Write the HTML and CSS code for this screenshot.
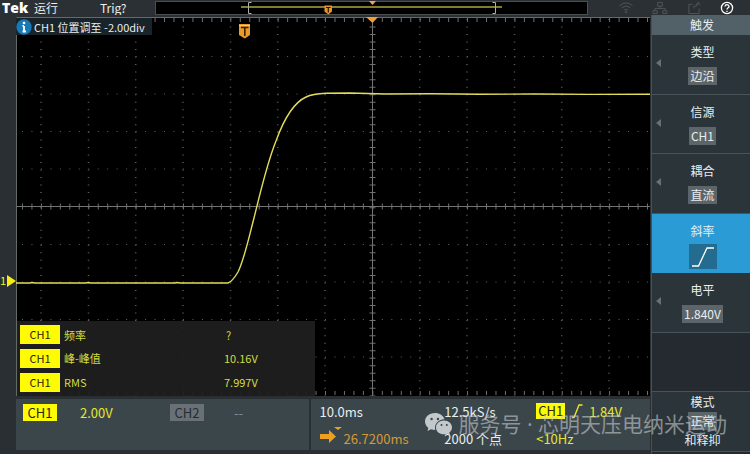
FILE: index.html
```html
<!DOCTYPE html>
<html lang="zh-CN">
<head>
<meta charset="utf-8">
<title>Tek</title>
<link rel="stylesheet" href="styles.css">
</head>
<body>
<div class="device">
  <header class="topbar">
    <div class="status"><strong class="brand">Tek</strong><span class="run">运行</span><span>Trig?</span></div>
    <svg class="record" viewBox="155 1 433 14" preserveAspectRatio="none" aria-hidden="true">
      <rect x="155.500" y="1.500" width="432" height="13" fill="#000" stroke="#4b4f50"/>
      <path d="M241 7H502" stroke="#aaa740" stroke-width="1.600"/>
      <path d="M251.500 2.500H248.500V13.500H251.500M492.500 2.500H495.500V13.500H492.500" fill="none" stroke="#b0b0aa"/>
      <path d="M324.500 5.500H332V11.500L328.300 14.500L324.500 11.500Z" fill="#e8952a"/>
      <path d="M326 7.500H330.600M328.300 7.500V12.500" stroke="#241603" stroke-width="1.200"/>
      <path d="M369 1H376L372.500 5Z" fill="#eda45c"/>
    </svg>
    <div class="tools">
      <svg viewBox="0 0 16 14" class="tool dim"><path d="M1 5Q8-1 15 5M3.500 7.500Q8 3.500 12.500 7.500M6 10Q8 8 10 10"/><circle cx="8" cy="12" r=".7"/></svg>
      <svg viewBox="0 0 16 14" class="tool dim"><path d="M5.500 1.500H10.500V5.500H5.500ZM8 5.500V8M2.500 10V8H13.500V10M.5 10.500H5V13.500H.5ZM11 10.500H15.500V13.500H11Z"/></svg>
      <svg viewBox="0 0 16 14" class="tool dim"><path d="M6.500 3.500H2.500V13.500H13.500V8M8 8V5.500H9.500Q12.500 5.500 12.500 2M10 4L12.500 1.500L15 4"/></svg>
      <button class="help" aria-label="帮助"><svg viewBox="0 0 14 14"><circle cx="7" cy="7" r="5.600"/><path d="M5 5.500Q5.200 3.700 7 3.700Q9 3.800 9 5.400Q9 6.400 7.800 7Q7 7.500 7 8.600M7 9.800V11"/></svg></button>
    </div>
  </header>
  <main class="work">
    <section class="scope">
      <svg class="channel-mark" viewBox="0 0 16 379" preserveAspectRatio="none" aria-hidden="true"><path d="M7 258L16 264L7 270Z" fill="#f3ef13"/></svg>
      <span class="channel-number">1</span>
      <div class="plot">
        <svg class="wave" viewBox="16 17 634 379" preserveAspectRatio="none" role="img" aria-label="CH1">
          <defs>
            <path id="v" d="M0 18.900V396"/>
            <path id="h" d="M12.500 0H650"/>
          </defs>
          <g class="dots-v">
            <use href="#v" x="41"/><use href="#v" x="88.500"/><use href="#v" x="135.700"/><use href="#v" x="183"/><use href="#v" x="230.500"/><use href="#v" x="277.700"/><use href="#v" x="325"/><use href="#v" x="419.700"/><use href="#v" x="467"/><use href="#v" x="514.500"/><use href="#v" x="561.700"/><use href="#v" x="609"/>
          </g>
          <g class="dots-h">
            <use href="#h" y="56.500"/><use href="#h" y="94"/><use href="#h" y="131.500"/><use href="#h" y="169"/><use href="#h" y="244.500"/><use href="#h" y="282"/><use href="#h" y="319.500"/><use href="#h" y="357"/>
          </g>
          <g class="ticks"><path d="M12.500 20H650M12.500 393H650"/><path class="small" d="M12.500 206.500H650"/></g>
          <path class="ticks-y" d="M372.500 18.900V396"/>
          <path d="M16 206.500H650M372.500 17V396" stroke="#747474"/>
          <path d="M16.500 396V17.500H650" fill="none" stroke="#646b67"/>
          <path class="trace" d="M16 283H30L32 282.500L35 283H86L88 282.500L91 283H175L177 282.500L180 283H228C232 282 235 277 238 272C244 260 248 241 254 218C260 194 267 163 276 141C285 116 295 102 306 97C312 94 318 93.500 326 93.200L350 93L385 94L430 93.700L480 94.200L535 94L590 94.400L650 94.200"/>
          <path d="M366 17H378L372.500 23Z" fill="#eca03c"/>
          <path d="M239 24H250V35L244.800 38.500L239 35Z" fill="#e99a2b"/><path d="M239 25.500H250" stroke="#ffd35d"/>
          <path d="M241 27.500H248.500M244.800 27.500V36" stroke="#3a2002" stroke-width="1.600"/>
        </svg>
        <div class="notice"><svg viewBox="0 0 16 16"><circle cx="8" cy="8" r="7.700" fill="#1978b6"/><path d="M8 7V12M6.500 7H8M6.500 12.500H10" stroke="#fff" stroke-width="1.800"/><circle cx="8" cy="4" r="1.300" fill="#fff"/></svg><span>CH1 位置调至 -2.00div</span></div>
        <table class="measure">
          <tr><th><span>CH1</span></th><td>频率</td><td class="unknown">?</td></tr>
          <tr><th><span>CH1</span></th><td>峰-峰值</td><td>10.16V</td></tr>
          <tr><th><span>CH1</span></th><td>RMS</td><td>7.997V</td></tr>
        </table>
      </div>
    </section>
    <footer class="readouts">
      <div class="channels">
        <span class="tag">CH1</span><span class="yellow">2.00V</span><span class="tag off">CH2</span><span class="none">--</span>
      </div>
      <div class="timing">
        <span>10.0ms</span><span>12.5kS/s</span>
        <span class="yellow trigger"><b class="tag">CH1</b><svg viewBox="0 0 12 16"><path d="M1 14.500H3L8 2H11.500" fill="none" stroke="#eee92b" stroke-width="1.300"/></svg>1.84V</span>
        <span class="delay"><svg viewBox="0 0 22 16"><path d="M0 7H9V3L16 9.500L9 16V12H0Z" fill="#eda01f"/><path d="M14 0H22L18 3Z" fill="#eda01f"/></svg>26.7200ms</span><span>2000 个点</span><span class="yellow">&lt;10Hz</span>
      </div>
    </footer>
  </main>
  <nav class="menu" aria-label="触发">
    <h1>触发</h1>
    <button><i></i><span>类型</span><b>边沿</b></button>
    <button><i></i><span>信源</span><b>CH1</b></button>
    <button><i></i><span>耦合</span><b>直流</b></button>
    <button class="active" aria-label="斜率"><span>斜率</span><svg viewBox="0 0 28 24"><path d="M3 21.500H9.500L18 3.500H25" fill="none" stroke="#fff" stroke-width="1.300"/></svg></button>
    <button><i></i><span>电平</span><b>1.840V</b></button>
    <div class="blank"></div>
    <button class="mode"><span>模式</span><b>正常</b><span>和释抑</span></button>
  </nav>
  <div class="watermark">
    <svg viewBox="0 0 27 23"><path d="M10 0C4 0 0 4 0 8.500C0 11 1.200 13.300 3.300 15L2.500 18L6 16.300Q8 17 10.300 17C9 11 13 6.500 19.500 6.300C18.500 2.500 14.500 0 10 0Z"/><path d="M19 7.500C14.500 7.500 11 10.500 11 14.400S14.500 21.300 19 21.300Q20.800 21.300 22.300 20.700L25 22.200L24.300 19.500C26 18.200 27 16.400 27 14.400C27 10.500 23.500 7.500 19 7.500Z"/><g class="eyes"><circle cx="6.600" cy="6" r="1.200"/><circle cx="13" cy="6" r="1.200"/><circle cx="16.500" cy="12" r="1"/><circle cx="21.800" cy="12" r="1"/></g></svg>
    <span>服务号 · 芯明天压电纳米运动</span>
  </div>
</div>
</body>
</html>
```
FILE: styles.css
```css
* { box-sizing: border-box; }
body { margin: 0; background: #24292e; color: #e9eeee; font: 12px/16px "Noto Sans CJK SC", sans-serif; }
button { border: 0; padding: 0; background: none; color: inherit; font: inherit; cursor: pointer; }
svg { display: block; }
.device { position: relative; min-height: 100vh; display: grid; grid-template: 15px 1fr / 1fr 99px; }

.topbar { grid-column: 1 / -1; display: flex; align-items: center; background: #2b3035; }
.status { flex: 0 0 155px; display: flex; align-items: center; padding-left: 2px; }
.brand { width: 32px; font: 800 14px/15px "Open Sans", sans-serif; color: #fff; }
.run { width: 66px; }
.record { flex: 1; min-width: 0; height: 14px; }
.tools { flex: 0 0 162px; display: flex; align-items: center; padding-left: 30px; gap: 18px; }
.tool { width: 16px; height: 13px; fill: none; stroke: #52585c; }
.help { width: 14px; height: 14px; }
.help svg { fill: none; stroke: #fff; stroke-width: 1.3; }

.work { display: grid; grid-template-rows: 1fr 51px; row-gap: 3px; padding: 2px 1px 4px 0; min-width: 0; background: #2a2f34; }
.scope { position: relative; display: grid; grid-template-columns: 16px 1fr; }
.channel-mark { width: 16px; height: 100%; }
.channel-number { position: absolute; left: 0; top: 69.5%; color: #f3ef13; font-size: 11px; line-height: 16px; transform: translateY(-50%); }
.plot { position: relative; background: #000; }
.wave { position: absolute; width: 100%; height: 100%; }
.dots-v { stroke: #5d5d5d; stroke-width: 1.5; stroke-dasharray: 1 6.53; }
.dots-h { stroke: #626262; stroke-width: 1; stroke-dasharray: 1 8.47; }
.ticks { stroke: #707070; stroke-width: 4; stroke-dasharray: 1 8.47; }
.small { stroke-width: 6; }
.ticks-y { stroke: #707070; stroke-width: 6; stroke-dasharray: 1 6.53; }
.trace { fill: none; stroke: #e2de58; stroke-width: 1.4; }
.notice { position: absolute; top: 1px; left: 0; display: flex; align-items: center; gap: 2px; padding-right: 7px; height: 17px; background: #18232a; font-size: 11px; }
.notice svg { width: 16px; height: 16px; }

.measure { position: absolute; left: 1px; bottom: 0; width: 47%; height: 75px; padding: 2px 0; border-spacing: 0; table-layout: fixed; background: #201f1fee; color: #d0dc43; font-size: 11px; }
.measure th, .measure td { padding: 0 0 0 3px; text-align: left; font-weight: 400; line-height: 16px; }
.measure th { width: 44px; }
.measure td:nth-child(2) { width: 160px; }
.measure th span { display: block; width: 40px; line-height: 19px; text-align: center; background: #fffb05; color: #28270c; }
.measure .unknown { padding-left: 5px; }

.readouts { display: grid; grid-template-columns: 293fr 340fr; gap: 2px; margin-left: 16px; line-height: 18px; font-size: 13px; }
.channels, .timing { background: #3b464b; }
.channels { display: grid; grid-template-columns: 57px 90px 64px 1fr; align-items: start; padding: 5px 7px; }
.tag { display: block; width: 34px; line-height: 17px; font-weight: 400; text-align: center; background: #fffb05; color: #28270c; }
.off { background: #697176; color: #252d31; }
.yellow { color: #e4e82e; }
.none { color: #818b90; }
.timing { display: grid; grid-template-columns: 125fr 92fr 114fr; grid-template-rows: 27px 18px; padding: 4px 0 0 9px; }
.trigger, .delay { display: flex; }
.trigger .tag { width: 29px; line-height: 16px; height: 16px; }
.trigger svg { width: 12px; height: 16px; margin: 0 6px; }
.delay { color: #d59a35; gap: 2px; white-space: nowrap; }
.delay svg { width: 22px; height: 16px; flex: none; margin-top: -3px; }

.menu { display: grid; grid-template-rows: 20px repeat(7, 1fr); padding-bottom: 2px; border-left: 1px solid #465155; }
.menu h1 { margin: 0; font: 12px/20px "Noto Sans CJK SC", sans-serif; text-align: center; background: #526067; padding-left: 2px; }
.menu button { position: relative; display: flex; flex-direction: column; align-items: center; padding: 9px 0 0 3px; gap: 7px; background: #2a3439; border-bottom: 1px solid #48535a; }
.menu b { padding: 0 2px; line-height: 18px; font-weight: 400; background: #5c656a; }
.menu i { position: absolute; left: 4px; top: 24px; border: solid transparent; border-width: 4px 5px 4px 0; border-right-color: #667177; }
.menu .active { background: #2a9bd5; border-color: #2a9bd5; }
.active svg { width: 28px; height: 25px; background: #246b90; margin-top: -2px; }
.blank { background: #252a30; border-bottom: 1px solid #48535a; }
.menu .mode { padding-top: 2px; gap: 2px; }

.watermark { position: absolute; right: 23px; bottom: 16px; display: flex; align-items: center; gap: 6px; color: #c7cccf99; font: 21px/28px "Noto Sans", "Noto Sans CJK SC", sans-serif; white-space: nowrap; pointer-events: none; }
.watermark svg { width: 27px; height: 23px; fill: #c3c8ca; }
.watermark .eyes { fill: #3b464b; }
```
